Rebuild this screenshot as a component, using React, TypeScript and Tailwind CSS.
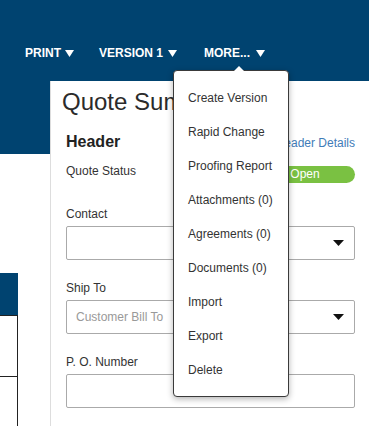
import React from "react";

function Caret({ className = "" }: { className?: string }) {
  return (
    <svg width="9" height="7" viewBox="0 0 9 7" className={className}>
      <polygon points="0,0 9,0 4.5,7" fill="currentColor" />
    </svg>
  );
}

function SelectArrow() {
  return (
    <svg width="11" height="6" viewBox="0 0 11 6">
      <polygon points="0,0 11,0 5.5,6" fill="#111" />
    </svg>
  );
}

const menuItems = [
  "Create Version",
  "Rapid Change",
  "Proofing Report",
  "Attachments (0)",
  "Agreements (0)",
  "Documents (0)",
  "Import",
  "Export",
  "Delete",
];

export default function App() {
  return (
    <div className="relative w-[369px] h-[426px] overflow-hidden bg-[linear-gradient(to_bottom,#004370_154px,#ffffff_154px)] font-['Liberation_Sans',Arial,sans-serif]">
      {/* Top nav */}
      <div className="flex h-[81px] items-start pl-[25px] pt-[45px] text-[12px] font-bold leading-[16px] text-white">
        <div className="flex items-center gap-[4px]">
          <span>PRINT</span>
          <Caret />
        </div>
        <div className="ml-[25px] flex items-center gap-[5px]">
          <span>VERSION 1</span>
          <Caret />
        </div>
        <div className="ml-[27px] flex items-center gap-[6px]">
          <span>MORE...</span>
          <Caret />
        </div>
      </div>

      {/* Body */}
      <div className="flex">
        {/* Left column with clipped table */}
        <div className="w-[50px] shrink-0 pt-[192px]">
          <div className="w-[18px]">
            <div className="h-[42px] bg-[#004370]" />
            <div className="h-[61px] border-t border-r border-[#222]" />
            <div className="h-[61px] border-t border-r border-[#222]" />
          </div>
        </div>

        {/* Panel */}
        <div className="h-[345px] flex-1 border-l border-[#dddddd] bg-white">
          <div className="whitespace-nowrap px-[11px] pt-[7px] text-[24px] leading-[28px] text-[#2b2b2b]">
            Quote Summary
          </div>
          <div className="pl-[15px] pr-[14px]">
            <div className="mt-[16px] flex items-baseline justify-between">
              <span className="text-[16px] font-bold leading-[20px] text-[#222]">Header</span>
              <span className="text-[12px] leading-[16px] text-[#3f7cb8]">Header Details</span>
            </div>
            <div className="mt-[11px] flex h-[20px] items-start justify-between">
              <span className="text-[12px] leading-[17px] text-[#333]">Quote Status</span>
              <span className="mt-[3px] h-[17px] w-[100px] rounded-full bg-[#7ac142] text-center text-[12px] font-medium leading-[17px] text-white">
                Open
              </span>
            </div>

            <div className="mt-[23px]">
              <div className="mb-1 text-[12px] leading-[16px] text-[#333]">Contact</div>
              <div className="flex h-[34px] items-center justify-end rounded-[2px] border border-[#aaaaaa] pl-[9px] pr-[10px]">
                <SelectArrow />
              </div>
            </div>

            <div className="mt-[20px]">
              <div className="mb-1 text-[12px] leading-[16px] text-[#333]">Ship To</div>
              <div className="flex h-[34px] items-center justify-between rounded-[2px] border border-[#aaaaaa] pl-[9px] pr-[10px]">
                <span className="text-[12px] text-[#999]">Customer Bill To</span>
                <SelectArrow />
              </div>
            </div>

            <div className="mt-[20px]">
              <div className="mb-1 text-[12px] leading-[16px] text-[#333]">P. O. Number</div>
              <div className="h-[34px] rounded-[2px] border border-[#aaaaaa]" />
            </div>
          </div>
        </div>
      </div>

      {/* Dropdown menu */}
      <div className="absolute left-[173px] top-[70px] w-[116px] rounded-[4px] border border-[#3a3a3a] bg-white pb-[9px] pt-[10px] shadow-[0_2px_6px_rgba(0,0,0,0.3)]">
        <svg width="10" height="5" viewBox="0 0 10 5" className="absolute -top-[5px] left-[60px]">
          <polygon points="0,5 10,5 5,0" fill="#ffffff" />
        </svg>
        {menuItems.map((item) => (
          <div key={item} className="h-[34px] whitespace-nowrap pl-[14px] text-[12px] leading-[34px] text-[#333]">
            {item}
          </div>
        ))}
      </div>
    </div>
  );
}
